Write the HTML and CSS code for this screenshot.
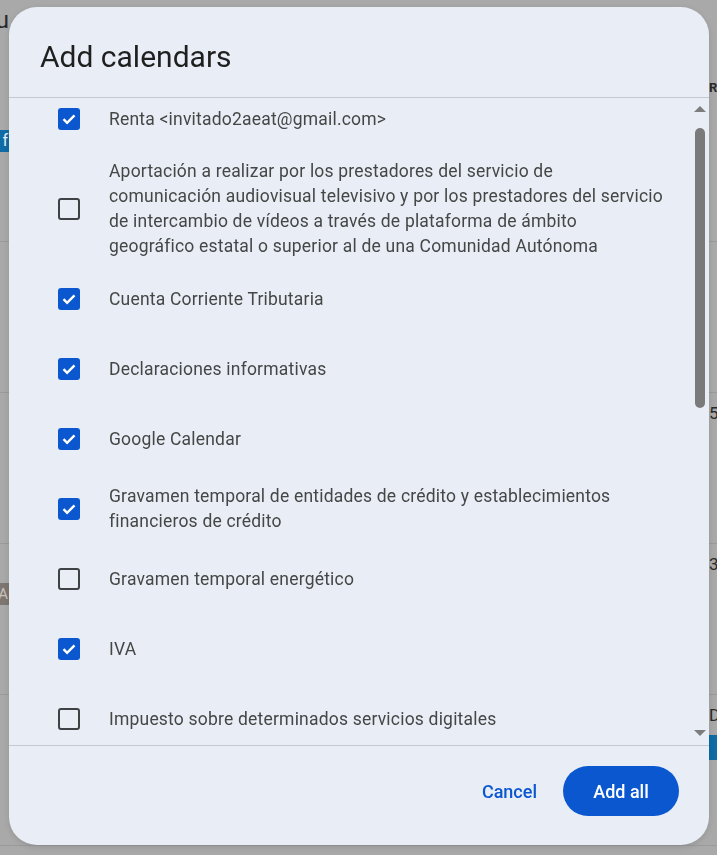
FILE: index.html
```html
<!DOCTYPE html>
<html lang="es">
<head>
<meta charset="utf-8">
<title>Add calendars</title>
<link rel="stylesheet" href="styles.css">
</head>
<body>
<div class="app">
  <div class="bg-row bg-row-1">
    <div class="bg-left">
      <span class="bg-text bg-nu">nu</span>
      <span class="bg-chip bg-chip-blue">f</span>
    </div>
    <div class="bg-right">
      <span class="bg-text bg-ri">RI</span>
    </div>
  </div>
  <div class="bg-row"></div>
  <div class="bg-row">
    <div class="bg-left"></div>
    <div class="bg-right"><span class="bg-text bg-r3">5</span></div>
  </div>
  <div class="bg-row">
    <div class="bg-left"><span class="bg-chip bg-chip-brown">A</span></div>
    <div class="bg-right"><span class="bg-text bg-r4">3</span></div>
  </div>
  <div class="bg-row">
    <div class="bg-left"></div>
    <div class="bg-right"><span class="bg-text bg-r5">D</span><span class="bg-bar"></span></div>
  </div>
</div>

<div class="dialog" role="dialog" aria-label="Add calendars">
  <div class="dialog-header">
    <h1 class="dialog-title">Add calendars</h1>
  </div>
  <div class="dialog-body">
    <div class="list">
      <div class="list-inner">
        <label class="item"><span class="cb checked"><svg viewBox="0 0 22 22"><path d="M5.5 11.2l3.6 3.6 7.4-7.4" fill="none" stroke="#fff" stroke-width="2.4"/></svg></span><span class="item-text">Renta &lt;invitado2aeat@gmail.com&gt;</span></label>
        <label class="item"><span class="cb"></span><span class="item-text">Aportación a realizar por los prestadores del servicio de comunicación audiovisual televisivo y por los prestadores del servicio de intercambio de vídeos a través de plataforma de ámbito geográfico estatal o superior al de una Comunidad Autónoma</span></label>
        <label class="item"><span class="cb checked"><svg viewBox="0 0 22 22"><path d="M5.5 11.2l3.6 3.6 7.4-7.4" fill="none" stroke="#fff" stroke-width="2.4"/></svg></span><span class="item-text">Cuenta Corriente Tributaria</span></label>
        <label class="item"><span class="cb checked"><svg viewBox="0 0 22 22"><path d="M5.5 11.2l3.6 3.6 7.4-7.4" fill="none" stroke="#fff" stroke-width="2.4"/></svg></span><span class="item-text">Declaraciones informativas</span></label>
        <label class="item"><span class="cb checked"><svg viewBox="0 0 22 22"><path d="M5.5 11.2l3.6 3.6 7.4-7.4" fill="none" stroke="#fff" stroke-width="2.4"/></svg></span><span class="item-text">Google Calendar</span></label>
        <label class="item"><span class="cb checked"><svg viewBox="0 0 22 22"><path d="M5.5 11.2l3.6 3.6 7.4-7.4" fill="none" stroke="#fff" stroke-width="2.4"/></svg></span><span class="item-text">Gravamen temporal de entidades de crédito y establecimientos financieros de crédito</span></label>
        <label class="item"><span class="cb"></span><span class="item-text">Gravamen temporal energético</span></label>
        <label class="item"><span class="cb checked"><svg viewBox="0 0 22 22"><path d="M5.5 11.2l3.6 3.6 7.4-7.4" fill="none" stroke="#fff" stroke-width="2.4"/></svg></span><span class="item-text">IVA</span></label>
        <label class="item"><span class="cb"></span><span class="item-text">Impuesto sobre determinados servicios digitales</span></label>
        <label class="item"><span class="cb"></span><span class="item-text">Impuesto sobre el valor de la producción de energía eléctrica</span></label>
      </div>
    </div>
    <div class="scrollbar">
      <span class="sb-arrow sb-up"></span>
      <span class="sb-thumb"></span>
      <span class="sb-space"></span>
      <span class="sb-arrow sb-down"></span>
    </div>
  </div>
  <div class="dialog-footer">
    <button class="btn btn-text">Cancel</button>
    <button class="btn btn-filled">Add all</button>
  </div>
</div>
</body>
</html>
```

FILE: styles.css
```css
html, body {
  margin: 0;
  padding: 0;
}
body {
  width: 717px;
  height: 855px;
  overflow: hidden;
  background: #a9a9a9;
  font-family: Roboto, "Liberation Sans", Arial, sans-serif;
}

/* background app (dimmed) */
.app {
  display: flex;
  flex-direction: column;
}
.bg-row {
  height: 150px;
  border-bottom: 1px solid #9b9b9b;
  display: flex;
  justify-content: space-between;
}
.bg-row-1 {
  height: 241px;
}
.bg-left, .bg-right {
  width: 9px;
  display: flex;
  flex-direction: column;
  overflow: hidden;
}
.bg-left {
  align-items: flex-end;
}
.bg-right {
  width: 8px;
  align-items: flex-start;
}
.bg-text {
  font-size: 17px;
  color: #2a2a2a;
  line-height: 20px;
  white-space: nowrap;
}
.bg-nu {
  margin-top: 10px;
  font-size: 24px;
}
.bg-chip {
  display: block;
  height: 22px;
  line-height: 22px;
  color: #e9f1f6;
  font-size: 16px;
  padding: 0 1px 0 2px;
  white-space: nowrap;
}
.bg-chip-blue {
  margin-top: 100px;
  background: #0f6ca6;
}
.bg-chip-brown {
  margin-top: 39px;
  background: #7e7670;
  color: #c9c2bc;
  font-size: 15px;
}
.bg-ri {
  margin-top: 78px;
  font-weight: 700;
  font-size: 13px;
  letter-spacing: -1px;
}
.bg-r3 { margin-top: 10px; }
.bg-r4 { margin-top: 10px; }
.bg-r5 { margin-top: 10px; }
.bg-bar {
  display: block;
  margin-top: 10px;
  height: 25px;
  width: 8px;
  background: #0f6ca6;
}

/* dialog */
.dialog {
  position: fixed;
  left: 9px;
  top: 7px;
  width: 700px;
  height: 838px;
  background: #e9eef6;
  border-radius: 28px;
  display: flex;
  flex-direction: column;
  overflow: hidden;
  box-shadow: 0 2px 6px rgba(0,0,0,0.12);
}
.dialog-header {
  padding: 32px 31px 22px;
  border-bottom: 1px solid #c5c8cc;
}
.dialog-title {
  margin: 0;
  font-weight: 400;
  font-size: 30px;
  line-height: 36px;
  color: #1f1f1f;
  letter-spacing: 0;
}
.dialog-body {
  height: 647px;
  display: flex;
}
.list {
  flex: 1;
  overflow: hidden;
}
.list-inner {
  margin-top: -14px;
}
.item {
  display: flex;
  align-items: center;
  min-height: 70px;
  box-sizing: border-box;
  padding: 5px 0 5px 49px;
  gap: 29px;
}
.cb {
  flex: none;
  width: 22px;
  height: 22px;
  box-sizing: border-box;
  border: 2px solid #3f4245;
  border-radius: 3px;
  display: flex;
}
.cb.checked {
  border: none;
  background: #0b57d0;
}
.cb svg {
  width: 22px;
  height: 22px;
}
.item-text {
  font-size: 17.5px;
  line-height: 25px;
  letter-spacing: 0.2px;
  color: #444746;
  max-width: 554px;
}

/* scrollbar */
.scrollbar {
  width: 18px;
  display: flex;
  flex-direction: column;
  align-items: center;
  padding: 8px 0 9px;
  box-sizing: border-box;
}
.sb-arrow {
  width: 0;
  height: 0;
  border-left: 6px solid transparent;
  border-right: 6px solid transparent;
}
.sb-up {
  border-bottom: 6px solid #7d7d7d;
}
.sb-down {
  border-top: 6px solid #7d7d7d;
}
.sb-thumb {
  margin-top: 16px;
  width: 10px;
  height: 280px;
  border-radius: 5px;
  background: #7a7a7a;
}
.sb-space {
  flex: 1;
}

/* footer */
.dialog-footer {
  flex: 1;
  border-top: 1px solid #c5c8cc;
  display: flex;
  justify-content: flex-end;
  align-items: flex-start;
  padding: 20px 30px 0 0;
  gap: 14px;
}
.btn {
  font-family: Roboto, "Liberation Sans", Arial, sans-serif;
  font-size: 18px;
  font-weight: 500;
  height: 50px;
  border: none;
  border-radius: 25px;
  cursor: pointer;
}
.btn-text {
  background: transparent;
  color: #0b57d0;
  padding: 0 12px;
}
.btn-filled {
  background: #0b57d0;
  color: #ffffff;
  width: 116px;
  padding: 0;
}
```
